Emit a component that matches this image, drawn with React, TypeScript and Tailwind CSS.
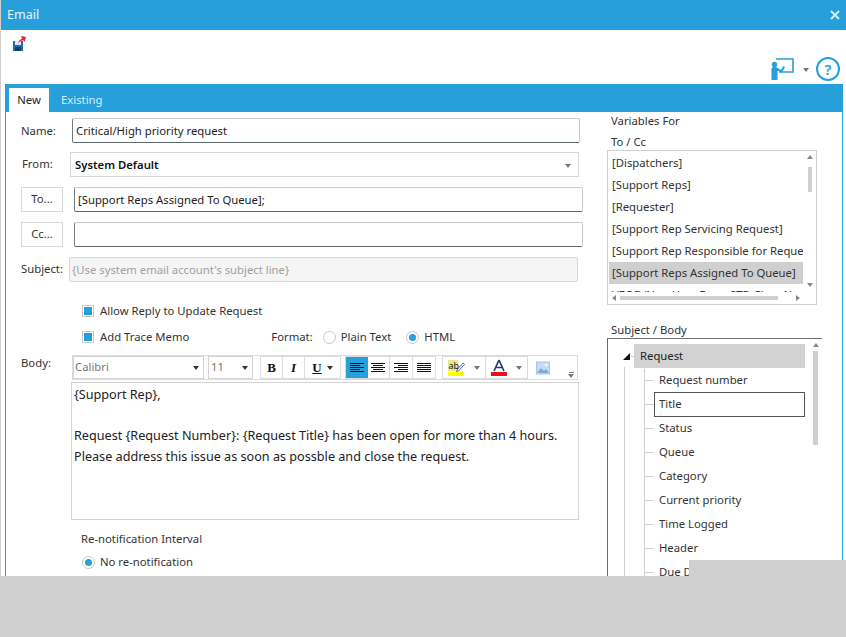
import React from "react";

const font = { fontFamily: '"Noto Sans", sans-serif' };

function Input({ className = "", children }: { className?: string; children?: React.ReactNode }) {
  return (
    <div className={"h-[25px] border border-[#c6ccd0] border-l-[#6f7a80] border-b-[#5f6a70] rounded-[2px] bg-white pl-[3px] pt-[1px] flex items-center text-[11.3px] text-[#222] whitespace-nowrap overflow-hidden " + className}>
      {children}
    </div>
  );
}

function Caret({ className = "" }: { className?: string }) {
  return <span className={"w-0 h-0 border-x-[3px] border-x-transparent border-t-[4px] " + className} />;
}

function Check({ label }: { label: string }) {
  return (
    <div className="flex items-center gap-[6px] text-[11.3px] text-[#333]">
      <span className="w-[12px] h-[12px] border border-[#c8c8c8] flex items-center justify-center">
        <span className="w-[8px] h-[8px] bg-[#269fdb]" />
      </span>
      {label}
    </div>
  );
}

function Radio({ label, on }: { label: string; on?: boolean }) {
  return (
    <div className="flex items-center gap-[5px] text-[11.3px] text-[#333]">
      <span className="w-[13px] h-[13px] rounded-full border border-[#c8c8c8] flex items-center justify-center">
        {on && <span className="w-[7px] h-[7px] rounded-full bg-[#269fdb]" />}
      </span>
      {label}
    </div>
  );
}

function AlignIcon({ mode }: { mode: "l" | "c" | "r" | "j" }) {
  const rows = [0, 1, 2, 3, 4];
  const w = (i: number) => (mode === "j" ? 14 : i % 2 === 0 ? 14 : 10);
  const x = (i: number) => (mode === "l" || mode === "j" ? 0 : mode === "c" ? (14 - w(i)) / 2 : 14 - w(i));
  return (
    <svg width="14" height="11" viewBox="0 0 14 11" shapeRendering="crispEdges">
      {rows.map((i) => (
        <rect key={i} x={x(i)} y={i * 2 + 1} width={w(i)} height="1" fill="#111" />
      ))}
    </svg>
  );
}

function Toolbar() {
  const cell = "h-[21px] border-r border-[#dcdcdc] flex items-center justify-center";
  return (
    <div className="ml-[1px] w-[506px] h-[25px] border border-[#dcdcdc] flex items-center bg-white">
      <div className="w-[131px] h-[23px] border border-[#d4d4d4] flex items-center justify-between pl-[1px] pr-[4px] text-[11.3px] text-[#777]">
        Calibri
        <Caret className="border-t-[#333]" />
      </div>
      <div className="ml-[4px] w-[45px] h-[23px] border border-[#d4d4d4] flex items-center justify-between pl-[2px] pr-[4px] text-[11.3px] text-[#777]">
        11
        <Caret className="border-t-[#333]" />
      </div>
      <div className="ml-[7px] w-[81px] h-[23px] border border-[#dcdcdc] flex">
        <div className={cell + " w-[22px] font-bold text-[13px] text-[#111]"} style={{ fontFamily: '"Liberation Serif", serif' }}>B</div>
        <div className={cell + " w-[22px] font-bold italic text-[13px] text-[#111]"} style={{ fontFamily: '"Liberation Serif", serif' }}>I</div>
        <div className="w-[35px] flex items-center justify-center gap-[5px]">
          <span className="font-bold underline text-[13px] text-[#111]" style={{ fontFamily: '"Liberation Serif", serif' }}>U</span>
          <Caret className="border-t-[#333]" />
        </div>
      </div>
      <div className="ml-[4px] w-[91px] h-[23px] border border-[#dcdcdc] flex">
        <div className="w-[22px] bg-[#269fdb] flex items-center justify-center"><AlignIcon mode="l" /></div>
        <div className={cell + " w-[23px]"}><AlignIcon mode="c" /></div>
        <div className={cell + " w-[23px]"}><AlignIcon mode="r" /></div>
        <div className="w-[23px] flex items-center justify-center"><AlignIcon mode="j" /></div>
      </div>
      <div className="ml-[6px] w-[86px] h-[23px] border border-[#dcdcdc] flex">
        <div className="w-[43px] border-r border-[#dcdcdc] flex items-center pl-[5px] gap-[9px]">
          <svg width="17" height="18" viewBox="0 0 17 18">
            <rect x="0" y="1" width="10" height="11" fill="#e6e88a" />
            <text x="0.5" y="10" fontSize="9" fill="#222" fontFamily="Noto Sans">ab</text>
            <path d="M9 11 L15 4 L16.5 5.5 L10.5 12 L8.5 12.5 Z" fill="#fff" stroke="#2a4a7a" strokeWidth="0.8" />
            <rect x="0" y="13" width="16" height="4" fill="#ffff00" />
          </svg>
          <Caret className="border-t-[#777]" />
        </div>
        <div className="w-[42px] flex items-center pl-[5px] gap-[9px]">
          <svg width="16" height="18" viewBox="0 0 16 18">
            <path d="M8 1 L3 12 M8 1 L13 12 M5 8.5 L11 8.5" stroke="#20407a" strokeWidth="1.7" fill="none" />
            <rect x="0" y="13" width="16" height="4" fill="#e8101c" />
          </svg>
          <Caret className="border-t-[#777]" />
        </div>
      </div>
      <div className="relative flex-1 h-[23px] flex items-center pl-[8px]">
        <svg width="14" height="14" viewBox="0 0 14 14">
          <rect x="0.5" y="1" width="13" height="12" fill="#c6dcf2" stroke="#a8c6e6" />
          <circle cx="10" cy="4" r="1.5" fill="#fbf3d0" />
          <path d="M1 12 L5 7 L8 10 L10 8 L13 12 Z" fill="#7ea6d0" />
        </svg>
        <div className="absolute right-[3px] bottom-[1px] flex flex-col items-center gap-[1px]">
          <span className="w-[5px] h-px bg-[#777]" />
          <Caret className="border-t-[#777]" />
        </div>
      </div>
    </div>
  );
}

function Left() {
  return (
    <div className="w-[601px] pt-[6px]">
      <div className="flex items-center">
        <span className="w-[66px] pl-[15px] pt-[1px] text-[11.3px] text-[#333]">Name:</span>
        <Input className="w-[508px]">Critical/High priority request</Input>
      </div>
      <div className="flex items-center mt-[9px]">
        <span className="w-[64px] pl-[16px] text-[11.3px] text-[#333]">From:</span>
        <div className="w-[509px] h-[25px] border border-[#d8d8d8] flex items-center justify-between pl-[4px] pt-[2px] pr-[7px] text-[11.3px] font-semibold text-[#111]">
          System Default
          <Caret className="border-t-[#777]" />
        </div>
      </div>
      <div className="flex items-center mt-[10px]">
        <div className="ml-[15px] w-[42px] h-[25px] border border-[#d8d8d8] flex items-center justify-center text-[11.3px] text-[#333]">To...</div>
        <Input className="ml-[11px] w-[509px]">[Support Reps Assigned To Queue];</Input>
      </div>
      <div className="flex items-center mt-[10px]">
        <div className="ml-[15px] w-[42px] h-[25px] border border-[#d8d8d8] flex items-center justify-center text-[11.3px] text-[#333]">Cc...</div>
        <Input className="ml-[11px] w-[509px]" />
      </div>
      <div className="flex items-center mt-[10px]">
        <span className="w-[63px] pl-[15px] text-[11.3px] text-[#333]">Subject:</span>
        <div className="w-[509px] h-[25px] border border-[#d8d8d8] rounded-[2px] bg-[#f5f5f5] flex items-center pl-[2px] pt-[1px] text-[11.3px] text-[#a0a0a0]">
          {"{Use system email account's subject line}"}
        </div>
      </div>
      <div className="ml-[76px] mt-[21px] h-[16px] flex items-center">
        <Check label="Allow Reply to Update Request" />
      </div>
      <div className="flex items-center mt-[10px] ml-[76px] h-[16px]">
        <Check label="Add Trace Memo" />
        <span className="ml-[82px] text-[11.3px] text-[#333]">Format:</span>
        <div className="ml-[10px]"><Radio label="Plain Text" /></div>
        <div className="ml-[15px]"><Radio label="HTML" on /></div>
      </div>
      <div className="flex mt-[10px]">
        <span className="w-[65px] pl-[15px] text-[11.3px] text-[#333]">Body:</span>
        <div>
          <Toolbar />
          <div className="mt-[2px] w-[508px] h-[138px] border border-[#d4d4d4] px-[2px] text-[12.63px] leading-[20.5px] text-[#222] pt-[1px]">
            <div>{"{Support Rep},"}</div>
            <div>&nbsp;</div>
            <div className="whitespace-nowrap">{"Request {Request Number}: {Request Title} has been open for more than 4 hours."}</div>
            <div className="whitespace-nowrap">Please address this issue as soon as possble and close the request.</div>
          </div>
        </div>
      </div>
      <div className="ml-[75px] mt-[11px] text-[11.3px] text-[#333]">Re-notification Interval</div>
      <div className="ml-[76px] mt-[6px]"><Radio label="No re-notification" on /></div>
    </div>
  );
}

const listItems = [
  "[Dispatchers]",
  "[Support Reps]",
  "[Requester]",
  "[Support Rep Servicing Request]",
  "[Support Rep Responsible for Request]",
  "[Support Reps Assigned To Queue]",
  "VEOD/Non User From STD Class N",
];

const treeItems = ["Request number", "Title", "Status", "Queue", "Category", "Current priority", "Time Logged", "Header", "Due Date"];

function Right() {
  return (
    <div className="w-[215px]">
      <div className="ml-[4px] mt-[-2px] text-[11.3px] leading-[21px] text-[#333]">
        <div>Variables For</div>
        <div>To / Cc</div>
      </div>
      <div className="relative mt-[-2px] w-[210px] h-[155px] border border-[#cfcfcf] overflow-hidden">
        <div className="h-[140px] w-[194px] ml-[1px] mt-[1px] overflow-hidden text-[11.3px] text-[#333]">
          {listItems.map((t, i) => (
            <div key={t} className={"h-[22px] pl-[3px] flex items-center whitespace-nowrap overflow-hidden " + (i === 5 ? "bg-[#cfcfcf]" : "")}>
              {t}
            </div>
          ))}
        </div>
        <div className="absolute left-[200px] top-[16px] w-[4px] h-[25px] bg-[#cfcfcf]" />
        <span className="absolute left-[199px] top-[4px] w-0 h-0 border-x-[3px] border-x-transparent border-b-[4px] border-b-[#888]" />
        <span className="absolute left-[199px] top-[132px] w-0 h-0 border-x-[3px] border-x-transparent border-t-[4px] border-t-[#888]" />
        <div className="absolute left-[12px] top-[145px] w-[158px] h-[4px] bg-[#cfcfcf]" />
        <span className="absolute left-[4px] top-[144px] w-0 h-0 border-y-[3px] border-y-transparent border-r-[4px] border-r-[#888]" />
        <span className="absolute left-[188px] top-[144px] w-0 h-0 border-y-[3px] border-y-transparent border-l-[4px] border-l-[#888]" />
      </div>
      <div className="ml-[4px] mt-[16px] text-[11.3px] leading-[17px] text-[#333]">Subject / Body</div>
      <div className="relative h-[260px] w-[215px] border-l border-t border-[#6f6f6f]">
        <span className="absolute left-[15px] top-[14px] w-0 h-0 border-l-[7px] border-l-transparent border-b-[7px] border-b-[#111]" />
        <div className="absolute left-[16px] top-[28px] h-[220px] w-px bg-[#cfcfcf]" />
        <div className="absolute left-[36px] top-[30px] h-[220px] w-px bg-[#cfcfcf]" />
        <span className="absolute left-[23px] top-[17px] w-[3px] h-px bg-[#cfcfcf]" />
        <div className="ml-[26px] mt-[5px] w-[171px] h-[24px] bg-[#d2d2d2] flex items-center pl-[6px] text-[11.3px] text-[#222]">Request</div>
        <div className="ml-[37px]">
          {treeItems.map((t) => (
            <div key={t} className="h-[24px] flex items-center text-[11.3px] text-[#333]">
              <span className="w-[9px] h-px bg-[#cfcfcf]" />
              {t === "Title" ? (
                <span className="h-[25px] w-[151px] border border-[#555] flex items-center pl-[4px]">{t}</span>
              ) : (
                <span className="pl-[5px]">{t}</span>
              )}
            </div>
          ))}
        </div>
        <span className="absolute left-[205px] top-[4px] w-0 h-0 border-x-[3px] border-x-transparent border-b-[4px] border-b-[#888]" />
        <div className="absolute left-[205px] top-[12px] w-[5px] h-[94px] bg-[#cfcfcf]" />
      </div>
    </div>
  );
}

export default function App() {
  return (
    <div className="relative w-[846px] h-[637px] overflow-hidden bg-white border-l border-[#d0d0d0]" style={font}>
      <div className="h-[30px] bg-[#269fdb] flex items-center justify-between pl-[6px] pr-[6px] text-[12.5px] text-[#e8f5fc]">
        Email
        <svg width="10" height="10" viewBox="0 0 10 10" stroke="#d5edf9" strokeWidth="2">
          <path d="M1 1 L9 9 M9 1 L1 9" />
        </svg>
      </div>
      <div className="relative h-[54px]">
        <svg className="absolute left-[11px] top-[5px]" width="15" height="16" viewBox="0 0 15 16">
          <rect x="1" y="6" width="10" height="10" fill="#1d6fb8" />
          <rect x="3" y="6" width="6" height="4" fill="#d6e6f4" />
          <rect x="3" y="12" width="6" height="4" fill="#123f6e" />
          <path d="M6 8 Q7 4.5 10 3.5 L9 1 L14 2 L12.5 7 L11.5 5.2 Q8.5 5.5 6 8 Z" fill="#d8283a" />
        </svg>
        <svg className="absolute left-[770px] top-[28px]" width="23" height="23" viewBox="0 0 23 23">
          <path d="M5 1 H22 V14 H8" fill="#fff" stroke="#269fdb" strokeWidth="1.6" />
          <circle cx="3.5" cy="6.5" r="2.7" fill="#269fdb" />
          <path d="M0.5 10.5 Q0.5 9 2.5 9 H5 L10 12 L12.5 8 L14 9 L11 14.5 L6.5 12.8 V22 H0.5 Z" fill="#269fdb" />
        </svg>
        <span className="absolute left-[802px] top-[38px] w-0 h-0 border-x-[3px] border-x-transparent border-t-[4px] border-t-[#777]" />
        <div className="absolute left-[815px] top-[27px] w-[24px] h-[24px] rounded-full border-[2px] border-[#269fdb] flex items-center justify-center text-[15px] font-semibold text-[#269fdb]">?</div>
      </div>
      <div className="ml-[4px] mr-[3px] h-[553px] border-x border-[#269fdb] overflow-hidden">
        <div className="h-[28px] bg-[#269fdb] flex items-end pl-[3px] text-[11.3px]">
          <div className="w-[40px] h-[24px] bg-white flex items-center justify-center text-[#222] pt-[1px]">New</div>
          <div className="ml-[12px] h-[24px] flex items-center text-[#d5edf9] pt-[1px]">Existing</div>
        </div>
        <div className="flex">
          <Left />
          <Right />
        </div>
      </div>
      <div className="absolute left-0 right-0 bottom-0 h-[61px] bg-[#cfcfcf]" />
      <div className="absolute left-[688px] top-[560px] right-0 h-[20px] bg-[#cfcfcf]" />
    </div>
  );
}
